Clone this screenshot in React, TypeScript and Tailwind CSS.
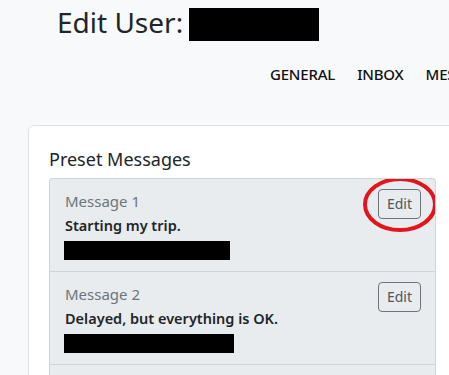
const font = { fontFamily: '"Noto Sans", "Open Sans", sans-serif' };

interface PresetMessage {
  label: string;
  text: string;
  redactedWidth: string;
  circled?: boolean;
}

const MESSAGES: PresetMessage[] = [
  { label: "Message 1", text: "Starting my trip.", redactedWidth: "w-[166px]", circled: true },
  { label: "Message 2", text: "Delayed, but everything is OK.", redactedWidth: "w-[170px]" },
];

const MessageItem: React.FC<{ message: PresetMessage }> = ({ message }) => {
  return (
    <div className="flex items-start justify-between border-b border-[#ced4da] pl-[14px] pr-[14px] pt-[10px] pb-[11px]">
      <div className="flex flex-col">
        <span className="pl-px text-[15px] leading-6 text-[#6c757d]">{message.label}</span>
        <span className="pl-px text-[14.5px] leading-6 font-semibold text-[#212529]">{message.text}</span>
        <div className={`mt-1 h-[19px] bg-black ${message.redactedWidth}`}></div>
      </div>
      <div className="relative">
        <button className="rounded-[4px] border border-[#6c757d] bg-transparent px-2 py-1 text-[14px] leading-5 text-[#50565c]">
          Edit
        </button>
        {message.circled && (
          <svg
            className="pointer-events-none absolute left-[-16px] top-[-13px]"
            width="76"
            height="57"
            viewBox="0 0 76 57"
          >
            <ellipse cx="38" cy="28.5" rx="35" ry="25.5" fill="none" stroke="#e3141c" strokeWidth="4" />
          </svg>
        )}
      </div>
    </div>
  );
};

export default function App() {
  return (
    <div className="h-[375px] w-full overflow-hidden bg-[#f8f9fa]" style={font}>
      {/* title */}
      <div className="flex items-start gap-[6px] pl-[57px] pt-[5px]">
        <h1 className="text-[28px] leading-[34px] font-normal text-[#212529]">Edit User:</h1>
        <div className="mt-[3px] h-[33px] w-[130px] bg-black"></div>
      </div>

      {/* tabs */}
      <nav className="mt-[23px] flex gap-[22px] whitespace-nowrap pl-[270px] text-[15px] leading-5 font-medium tracking-[-0.2px] text-[#111]">
        <span>GENERAL</span>
        <span>INBOX</span>
        <span>MESSAGES</span>
      </nav>

      {/* card */}
      <div className="ml-[28px] mt-[41px] w-[429px] rounded-[6px] border border-[#dfe1e4] bg-white p-5 pb-10">
        <h2 className="mb-[5px] text-[18px] leading-[27px] font-normal text-[#212529]">Preset Messages</h2>
        <div className="overflow-hidden rounded-[4px] border border-b-0 border-[#ced4da] bg-[#e9ecef]">
          {MESSAGES.map((m) => (
            <MessageItem key={m.label} message={m} />
          ))}
          <div className="h-[40px]"></div>
        </div>
      </div>
    </div>
  );
}
